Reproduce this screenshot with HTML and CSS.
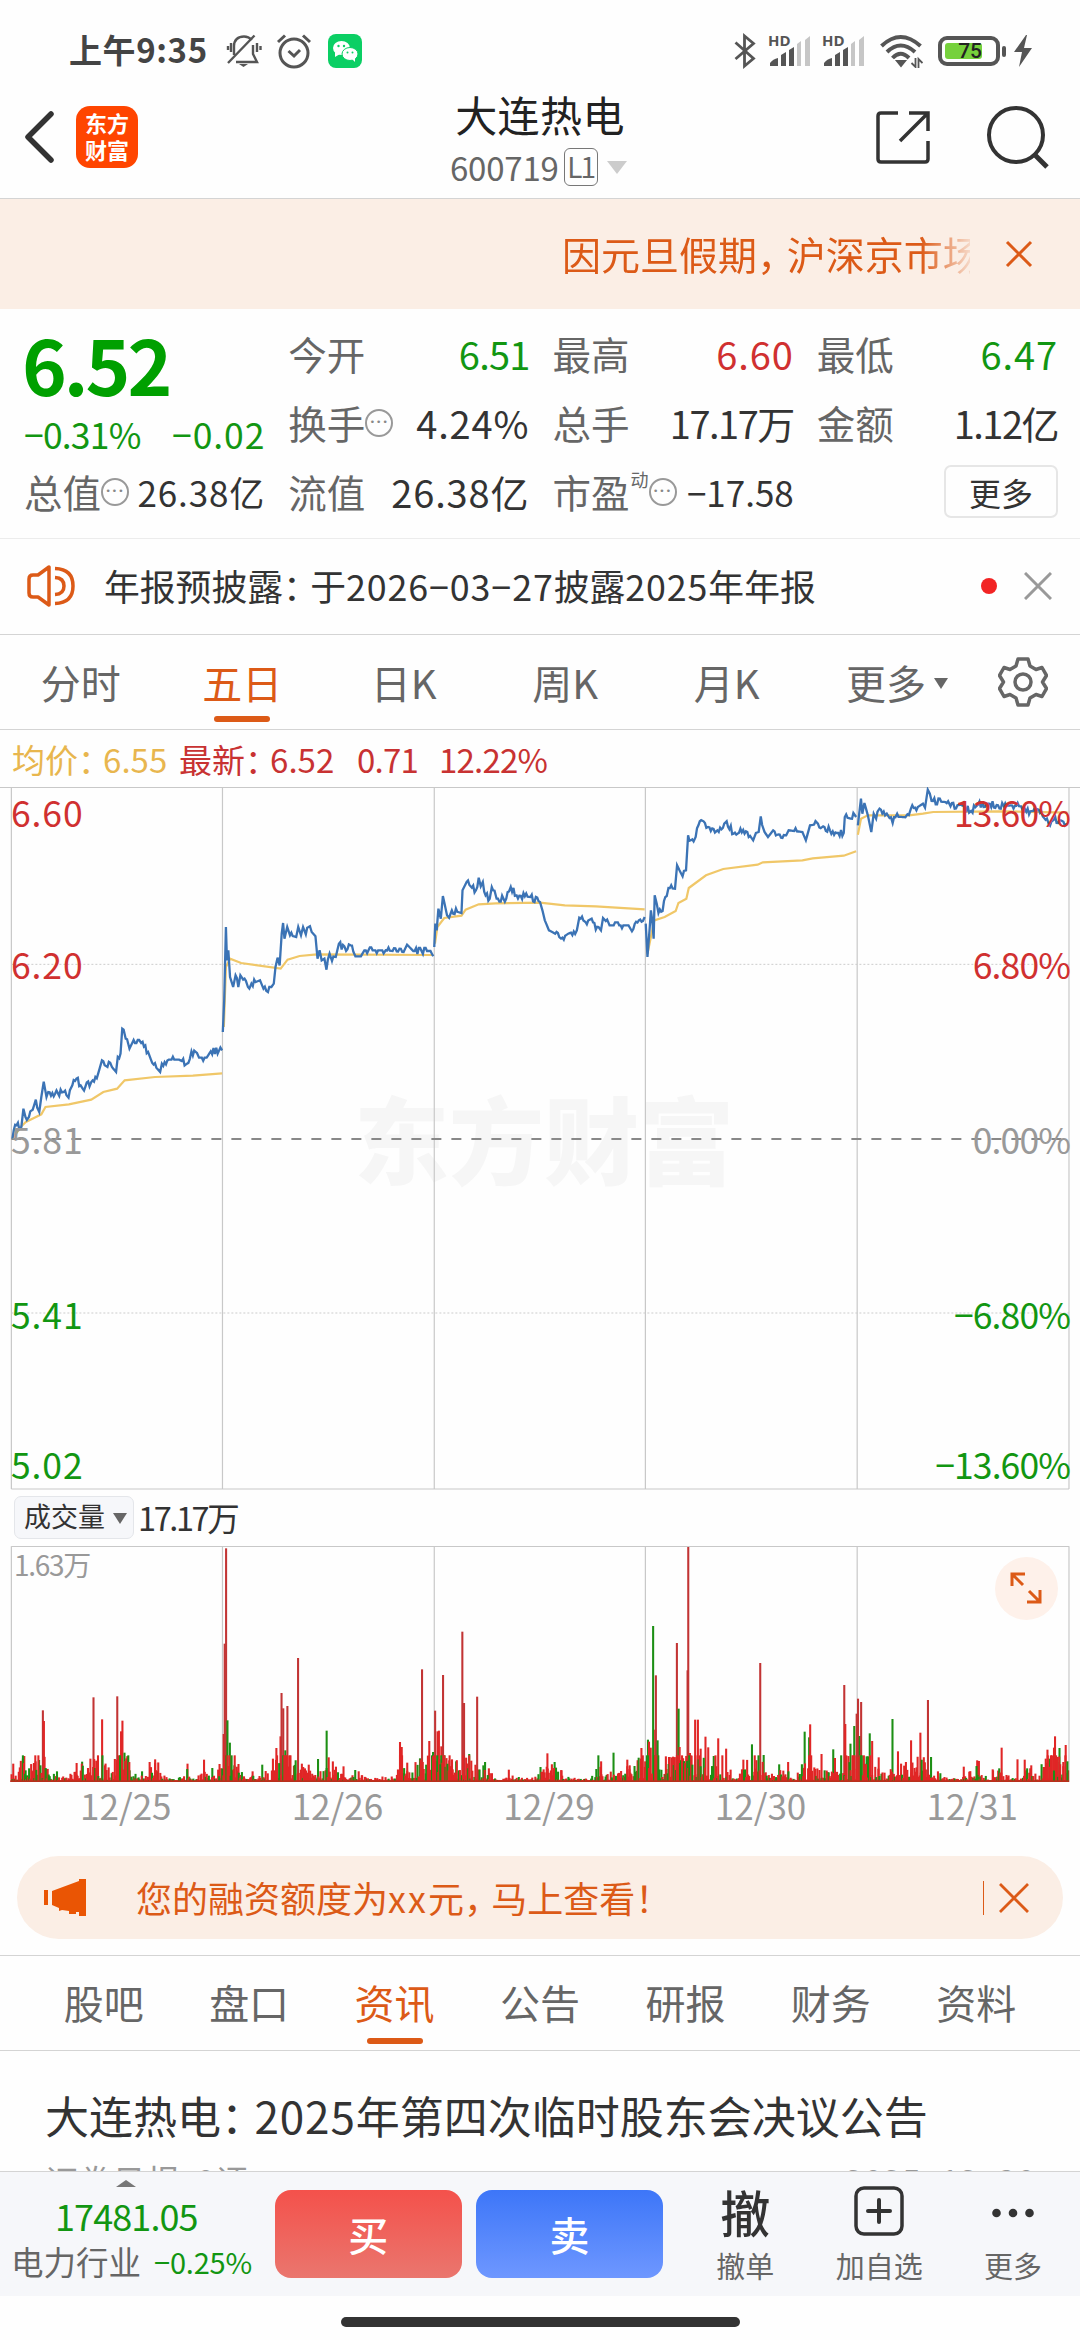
FILE: index.html
```html
<!DOCTYPE html>
<html lang="zh-CN">
<head>
    <meta charset="UTF-8">
    <meta name="viewport" content="width=device-width, initial-scale=1.0">
    <title>大连热电 600719</title>
    <link rel="stylesheet" href="styles.css">
</head>
<body>
    <div class="status">
        <span class="clock">上午9:35</span>
        <svg class="bell" width="36" height="34" viewBox="0 0 36 34" fill="none" stroke="#555" stroke-width="2.4">
            <path d="M8 21V12C8 6 12 2.500 18 2.500C21 2.500 24 4 26 6M27 11V20L31 28H10M5 9V18M2 12V16M31 9V18M34.500 12V16M28.500 1.500L2 29"/>
            <path d="M13 30h9l-4.500 3z" fill="#555" stroke="none"/>
        </svg>
        <svg class="alarm" width="36" height="36" viewBox="0 0 36 36" fill="none" stroke="#555" stroke-width="3">
            <circle cx="18" cy="20" r="14"/>
            <path d="M12.500 18L18 23L24 17M2 9L9 2.500M27 2.500L34 9"/>
        </svg>
        <svg class="wechat" width="34" height="34" viewBox="0 0 34 34">
            <rect width="34" height="34" rx="8" fill="#0bcf64"/>
            <ellipse cx="13.500" cy="14" rx="8.500" ry="7" fill="#fff"/>
            <path d="M7 18l0 5l5-3z" fill="#fff"/>
            <ellipse cx="22" cy="20" rx="8" ry="6.500" fill="#fff" stroke="#0bcf64" stroke-width="1"/>
            <path d="M24 25l3 3v-5z" fill="#fff"/>
            <g fill="#0bcf64"><circle cx="10.500" cy="12" r="1.200"/><circle cx="16" cy="12" r="1.200"/><circle cx="19.500" cy="18.500" r="1"/><circle cx="24.500" cy="18.500" r="1"/></g>
        </svg>
        <span class="spacer"></span>
        <svg class="bt" width="22" height="36" viewBox="0 0 22 36" fill="none" stroke="#555" stroke-width="2.800">
            <path d="M1.500 9.500L19.500 25.500L10.500 33V3L19.500 10.500L1.500 26"/>
        </svg>
        <div class="signal"><b>HD</b>
            <svg width="41" height="30" viewBox="0 0 41 30"><path d="M1 30v-3q3-4 8-5v8zM12 30V19l5-3v14zM20 30V14l5-3v19z" fill="#555"/><path d="M28 30V8l4-3v25zM36 30V4l5-4v30z" fill="#c6c6c6"/></svg>
        </div>
        <div class="signal second"><b>HD</b>
            <svg width="41" height="30" viewBox="0 0 41 30"><path d="M1 30v-3q3-4 8-5v8zM12 30V19l5-3v14zM20 30V14l5-3v19z" fill="#555"/><path d="M28 30V8l4-3v25zM36 30V4l5-4v30z" fill="#c6c6c6"/></svg>
        </div>
        <svg class="wifi" width="43" height="34" viewBox="0 0 43 34" fill="none" stroke="#555" stroke-width="4">
            <path d="M1.500 12Q20.500-6 40.500 12M7 18Q20.500 5 35 18M12.500 24Q20.500 15.500 29 24"/>
            <path d="M17 27h8l-4 5z" fill="#555" stroke-width="2"/>
            <path d="M35.500 24V33l-4-4M38.500 34V25l4 4" stroke-width="1.800"/>
        </svg>
        <div class="battery"><span>75</span></div>
        <i class="battery-cap"></i>
        <svg class="bolt" width="18" height="32" viewBox="0 0 18 32"><path d="M12 0L0 17H8L5 32L18 13H10L13 0z" fill="#555"/></svg>
    </div>

    <div class="nav">
        <svg class="back" width="32" height="54" viewBox="0 0 32 54" fill="none" stroke="#333" stroke-width="5.500" stroke-linecap="round" stroke-linejoin="round"><path d="M27 4L4 27L27 50"/></svg>
        <div class="logo">东方<br>财富</div>
        <div class="stock">
            <h1>大连热电</h1>
            <div class="code">600719<span class="level">L1</span><i class="tri"></i></div>
        </div>
        <svg class="share" width="54" height="54" viewBox="0 0 54 54" fill="none" stroke="#333" stroke-width="3.500">
            <path d="M22 3H5Q2 3 2 6V49Q2 52 5 52H49Q52 52 52 49V31M33 3H52V21M52 3L24 31"/>
        </svg>
        <svg class="search" width="64" height="66" viewBox="0 0 64 66" fill="none" stroke="#333" stroke-width="4">
            <circle cx="30" cy="30" r="27"/><path d="M48 49L61 62" stroke-width="5"/>
        </svg>
    </div>

    <div class="banner">
        <span class="banner-text">因元旦假期<s>，</s>沪深京市场</span>
        <svg width="28" height="28" viewBox="0 0 28 28" stroke="#dc5a17" stroke-width="3"><path d="M2 2L26 26M26 2L2 26"/></svg>
    </div>

    <div class="quote">
        <div class="price">
            <strong>6.52</strong>
            <div class="change"><span>−0.31%</span><span class="wide">−0.02</span></div>
        </div>
        <div class="cell"><label>今开</label><b class="green">6.51</b></div>
        <div class="cell"><label>最高</label><b class="red wide">6.60</b></div>
        <div class="cell"><label>最低</label><b class="green wide">6.47</b></div>
        <div class="cell"><label>换手</label><i class="info">•••</i><b class="wide">4.24%</b></div>
        <div class="cell"><label>总手</label><b class="tight">17.17万</b></div>
        <div class="cell"><label>金额</label><b class="tight">1.12亿</b></div>
        <div class="cell small"><label>总值</label><i class="info">•••</i><b class="wide">26.38亿</b></div>
        <div class="cell"><label>流值</label><b class="wide">26.38亿</b></div>
        <div class="cell small"><label>市盈</label><sup>动</sup><i class="info">•••</i><b>−17.58</b></div>
        <div class="cell"><button class="more">更多</button></div>
    </div>

    <div class="notice">
        <svg width="48" height="42" viewBox="0 0 48 42" fill="none" stroke="#dc5a17" stroke-width="3.500" stroke-linejoin="round">
            <path d="M11 10L22 2V40L11 32H6Q2 32 2 28V14Q2 10 6 10z"/>
            <path d="M28 12.500Q37 13 37 21Q37 29 28 29.500M28 3.500Q46 4 46 21Q46 38 28 38.500"/>
        </svg>
        <p>年报预披露<s>：</s>于<span class="wide">2026−03−27</span>披露<span class="wide">2025</span>年年报</p>
        <i class="dot"></i>
        <svg width="28" height="28" viewBox="0 0 28 28" stroke="#999" stroke-width="3"><path d="M1 1L27 27M27 1L1 27"/></svg>
    </div>

    <div class="periods">
        <a>分时</a>
        <a class="active">五日</a>
        <a>日K</a>
        <a>周K</a>
        <a>月K</a>
        <a>更多<i class="tri"></i></a>
        <svg width="50" height="50" viewBox="0 0 50 50" fill="none" stroke="#666" stroke-width="3.500" stroke-linejoin="round">
            <path d="M20 2H30L32 9L38 12.500L44 10.500L48.500 18.500L44.500 25L48.500 31.500L44 39.500L38 37.500L32 41L30 48H20L18 41L12 37.500L6 39.500L1.500 31.500L5.500 25L1.500 18.500L6 10.500L12 12.500L18 9z"/>
            <circle cx="25" cy="25" r="8"/>
        </svg>
    </div>

    <div class="legend">
        <span class="avg">均价<s>：</s>6.55</span>
        <span class="last">最新<s>：</s>6.52</span>
        <span class="diff">0.71</span>
        <span class="pct">12.22%</span>
    </div>

    <div class="chart">
        <div class="watermark">东方财富</div>
        <svg id="priceChart" width="1080" height="703" viewBox="0 0 3136 2109" preserveAspectRatio="none"></svg>
        <div class="axis left">
            <span class="red">6.60</span>
            <span class="red">6.20</span>
            <span class="gray">5.81</span>
            <span class="green">5.41</span>
            <span class="green">5.02</span>
        </div>
        <div class="axis right">
            <span class="red">13.60%</span>
            <span class="red">6.80%</span>
            <span class="gray">0.00%</span>
            <span class="green">−6.80%</span>
            <span class="green">−13.60%</span>
        </div>
    </div>

    <div class="volume-head">
        <span class="picker">成交量<i class="tri"></i></span>
        <span class="volume-now">17.17万</span>
    </div>

    <div class="volume">
        <svg id="volumeChart" width="1080" height="237" viewBox="0 0 3136 711" preserveAspectRatio="none"></svg>
        <span class="volume-max">1.63万</span>
        <div class="expand">
            <svg width="32" height="32" viewBox="0 0 32 32" fill="none" stroke="#dc5a17" stroke-width="3"><path d="M2 14V2H15M2 2L13 13M30 18V30H17M30 30L19 19"/></svg>
        </div>
    </div>
    <div class="dates"><span>12/25</span><span>12/26</span><span>12/29</span><span>12/30</span><span>12/31</span></div>

    <div class="promo">
        <svg width="42" height="38" viewBox="0 0 42 38" fill="#ea5504"><path d="M0 11h4v15H0zM8 12L35 2V0h7v37h-7v-4H32V35H25V32L18 31L15 32V29L8 26z"/></svg>
        <p>您的融资额度为<span class="wide">xx</span>元<s>，</s>马上查看！</p>
        <i class="sep"></i>
        <svg width="30" height="30" viewBox="0 0 30 30" stroke="#dc5a17" stroke-width="2.800"><path d="M1 1L29 29M29 1L1 29"/></svg>
    </div>

    <div class="sections">
        <a>股吧</a>
        <a>盘口</a>
        <a class="active">资讯</a>
        <a>公告</a>
        <a>研报</a>
        <a>财务</a>
        <a>资料</a>
    </div>

    <div class="news">
        <h2>大连热电<s>：</s><span class="wide">2025</span>年第四次临时股东会决议公告</h2>
        <div class="meta"><span>证券日报&nbsp; 0评</span><span>2025−12−30</span></div>
    </div>

    <div class="trade">
        <div class="sector">
            <i class="up"></i>
            <strong>17481.05</strong>
            <div><label>电力行业</label><b>−0.25%</b></div>
        </div>
        <button class="buy">买</button>
        <button class="sell">卖</button>
        <div class="tool revoke"><em>撤</em><span>撤单</span></div>
        <div class="tool add">
            <svg width="50" height="50" viewBox="0 0 50 50" fill="none" stroke="#333" stroke-width="3.500"><rect x="2" y="2" width="46" height="46" rx="8"/><path d="M25 14V36M14 25H36" stroke-width="4" stroke-linecap="round"/></svg>
            <span>加自选</span>
        </div>
        <div class="tool other">
            <svg width="50" height="50" viewBox="0 0 50 50" fill="#333"><circle cx="8.500" cy="27" r="4.300"/><circle cx="25" cy="27" r="4.300"/><circle cx="41.500" cy="27" r="4.300"/></svg>
            <span>更多</span>
        </div>
    </div>
    <div class="home"><i></i></div>

    <script src="script.js"></script>
</body>
</html>
```

FILE: styles.css
```css
* {
    box-sizing: border-box;
}

body {
    margin: 0;
    width: 1080px;
    height: 2340px;
    overflow: hidden;
    display: flex;
    flex-direction: column;
    background: #fefefe;
    color: #333;
    font-family: "Noto Sans CJK SC", sans-serif;
}

body > div {
    flex: none;
}

svg {
    display: block;
    flex: none;
}

h1, h2, p {
    margin: 0;
    font-weight: 400;
}

i, em {
    font-style: normal;
}

/* punctuation set narrower than a full character */
s {
    text-decoration: none;
    letter-spacing: -0.24em;
}

button {
    border: 0;
    padding: 0;
    font-family: inherit;
}

.green { color: #129612; }
.red { color: #d03030; }
.gray { color: #999; }
.wide { letter-spacing: 0.9px; }

.tri {
    display: inline-block;
    border: 7px solid transparent;
    border-top: 11px solid #666;
    border-bottom: 0;
}

/* status bar */
.status {
    display: flex;
    align-items: center;
    height: 82px;
    padding: 20px 48px 0 69px;
}

.clock {
    width: 157px;
    font-size: 33px;
    font-weight: 700;
    line-height: 40px;
    letter-spacing: 0.6px;
    margin-top: -5px;
    color: #444;
    white-space: nowrap;
}

.alarm { margin-left: 14px; }
.wechat { margin-left: 16px; }
.spacer { flex: 1; }

.signal {
    position: relative;
    width: 41px;
    margin-left: 13px;
}

.signal b {
    position: absolute;
    top: -3px;
    left: -1px;
    font: 700 15px/15px "Open Sans", sans-serif;
    color: #555;
    background: #fefefe;
}

.wifi { margin-left: 16px; }

.battery {
    width: 62px;
    height: 30px;
    margin-left: 15px;
    border: 4px solid #555;
    border-radius: 9px;
    padding: 3px;
}

.battery span {
    display: block;
    width: 37px;
    height: 16px;
    background: #76d13c;
    border-radius: 3px;
    font: 500 21px/17px Roboto, sans-serif;
    text-align: right;
    color: #222;
}

.battery-cap {
    width: 4px;
    height: 11px;
    margin: 0 8px 0 2px;
    border-radius: 2px;
    background: #555;
}

/* title bar */
.nav {
    display: flex;
    align-items: flex-start;
    height: 117px;
    padding-left: 24px;
    border-bottom: 1px solid #d4d4d4;
}

.back { margin-top: 28px; }

.logo {
    width: 62px;
    height: 62px;
    margin: 24px 0 0 20px;
    padding-top: 3px;
    border-radius: 14px;
    background: #ff4500;
    color: #fff;
    font-size: 22px;
    font-weight: 700;
    line-height: 27px;
    text-align: center;
}

.stock {
    width: 400px;
    margin: 9px 0 0 202px;
    text-align: center;
}

.stock h1 {
    font-size: 42px;
    line-height: 46px;
    letter-spacing: 0.4px;
    color: #222;
}

.code {
    display: flex;
    align-items: center;
    height: 40px;
    margin: 10px 0 0 110px;
    font-size: 33px;
    letter-spacing: -0.2px;
    color: #666;
}

.level {
    width: 34px;
    height: 38px;
    margin-left: 5px;
    border: 1.500px solid #777;
    border-radius: 6px;
    font-size: 28px;
    line-height: 34px;
    letter-spacing: -2px;
}

.code .tri {
    margin-left: 9px;
    border-width: 13px 10px 0;
    border-top-color: #ccc;
}

.share { margin: 28px 0 0 136px; }
.search { margin: 23px 0 0 56px; }

/* scrolling banner */
.banner {
    display: flex;
    align-items: center;
    justify-content: flex-end;
    height: 110px;
    padding-right: 47px;
    background: #fbeee5;
}

.banner-text {
    width: 408px;
    height: 60px;
    margin-right: 35px;
    overflow: hidden;
    white-space: nowrap;
    font-size: 39px;
    line-height: 58px;
    color: #dc5a17;
    -webkit-mask-image: linear-gradient(90deg, #000 88%, transparent 102%);
    mask-image: linear-gradient(90deg, #000 88%, transparent 102%);
}

/* quote figures */
.quote {
    display: grid;
    grid-template-columns: repeat(4, 1fr);
    grid-template-rows: repeat(3, 69px);
    column-gap: 23px;
    height: 230px;
    padding: 10px 22px 0 24px;
    border-bottom: 1px solid #ececec;
}

.price {
    grid-row: span 2;
    color: #00a000;
}

.price strong {
    display: block;
    height: 92px;
    margin-left: -2px;
    font-size: 76px;
    line-height: 88px;
    letter-spacing: -3px;
}

.change {
    display: flex;
    justify-content: space-between;
    font-size: 35.500px;
    line-height: 46px;
    color: #129612;
}

.change span:first-child { letter-spacing: -0.8px; }

.cell {
    display: flex;
    align-items: center;
    white-space: nowrap;
}

.cell label {
    font-size: 38.500px;
    line-height: 69px;
    color: #666;
}

.cell b {
    flex: 1;
    font-size: 38px;
    font-weight: 400;
    text-align: right;
}

.cell b.tight { letter-spacing: -1.500px; }
.cell b.green:not(.wide) { letter-spacing: -0.8px; }
.cell.small b { font-size: 35px; }

.cell sup {
    align-self: flex-start;
    margin: 9px 0 0 1px;
    font-size: 18px;
    line-height: 26px;
    color: #666;
}

.info {
    width: 28px;
    height: 28px;
    border: 2px solid #999;
    border-radius: 50%;
    font: 9px/23px "DejaVu Sans", sans-serif;
    letter-spacing: 1px;
    text-align: center;
    color: #888;
}

.more {
    width: 114px;
    height: 53px;
    margin-left: auto;
    border: 2px solid #e6e6e6;
    border-radius: 7px;
    background: #fefefe;
    font-size: 32px;
    line-height: 46px;
    color: #333;
}

/* disclosure notice */
.notice {
    display: flex;
    align-items: center;
    height: 96px;
    padding: 0 28px 2px 27px;
    border-bottom: 1px solid #d4d4d4;
}

.notice p {
    flex: 1;
    margin: -1px 0 0 29px;
    font-size: 35.800px;
    line-height: 50px;
}

.dot {
    width: 16px;
    height: 16px;
    margin-right: 27px;
    border-radius: 50%;
    background: #f22424;
}

/* chart period tabs */
.periods {
    display: flex;
    align-items: center;
    height: 95px;
    padding-right: 32px;
    border-bottom: 1px solid #d4d4d4;
    font-size: 40px;
    line-height: 91px;
    color: #666;
}

.periods a {
    position: relative;
    width: 161.500px;
    text-align: center;
    white-space: nowrap;
}

.periods a:nth-of-type(6) { width: 175px; margin-left: 2px; }
.periods .tri { margin: 0 0 10px 8px; }
.periods svg { margin-left: auto; }

.periods .active,
.sections .active {
    color: #dc5a17;
}

.active::after {
    content: "";
    position: absolute;
    left: 50%;
    bottom: 6px;
    width: 56px;
    height: 6px;
    margin-left: -28px;
    border-radius: 3px;
    background: #dc5a17;
}

.legend {
    display: flex;
    align-items: center;
    height: 57px;
    padding: 0 0 0 12px;
    font-size: 33px;
    line-height: 50px;
    white-space: nowrap;
    color: #c83232;
}

.legend .avg { width: 167px; color: #e8b64e; }
.legend .last { width: 178px; }
.legend .diff { width: 82px; letter-spacing: -0.8px; }
.legend .pct { letter-spacing: -0.8px; }

/* price chart */
.chart {
    position: relative;
    height: 703px;
}

.chart svg {
    position: relative;
}

.watermark {
    position: absolute;
    top: 288px;
    left: 354px;
    font-size: 95px;
    font-weight: 900;
    line-height: 124px;
    color: #f6f6f6;
}

.axis {
    position: absolute;
    top: 0;
    bottom: 0;
    display: grid;
    grid-template-rows: 51px 152px 175px 175px 150px;
    align-items: end;
    font-size: 35.500px;
    line-height: 52px;
}

.axis.left { left: 11px; letter-spacing: 0.9px; }
.axis.right { right: 10px; letter-spacing: -0.9px; text-align: right; }

.grid { fill: none; stroke: #c8c8c8; stroke-width: 1.200; vector-effect: non-scaling-stroke; }
.dots { fill: none; stroke: #ccc; stroke-width: 1; stroke-dasharray: 2 2; vector-effect: non-scaling-stroke; }
.base { fill: none; stroke: #888; stroke-width: 2; stroke-dasharray: 10 10; vector-effect: non-scaling-stroke; }
.line { fill: none; stroke: #3b73b5; stroke-width: 2.300; vector-effect: non-scaling-stroke; }
.mean { fill: none; stroke: #f0c768; stroke-width: 2.200; vector-effect: non-scaling-stroke; }

/* volume */
.volume-head {
    display: flex;
    align-items: center;
    height: 56px;
    padding: 0 0 2px 14px;
}

.picker {
    width: 120px;
    height: 43px;
    padding-left: 9px;
    border: 1px solid #e4e6ea;
    border-radius: 7px;
    background: #f6f7fa;
    font-size: 27px;
    line-height: 38px;
    white-space: nowrap;
}

.picker .tri { margin: 0 0 3px 8px; }

.volume-now {
    margin-left: 4px;
    font-size: 32.500px;
    line-height: 40px;
    letter-spacing: -2.400px;
}

.volume {
    position: relative;
    height: 237px;
}

.volume-max {
    position: absolute;
    top: 0;
    left: 14px;
    font-size: 28px;
    line-height: 36px;
    letter-spacing: -1.300px;
    color: #999;
}

.expand {
    position: absolute;
    top: 11px;
    right: 22px;
    width: 63px;
    height: 63px;
    padding: 15px;
    border-radius: 50%;
    background: #fef1ea;
}

.dates {
    display: flex;
    height: 73px;
    padding: 0 11px;
    font-size: 35px;
    line-height: 43px;
    text-align: center;
    color: #999;
}

.dates span { flex: 1; padding-left: 18px; }

/* promo pill */
.promo {
    display: flex;
    align-items: center;
    height: 83px;
    margin: 0 17px 16px;
    padding: 0 34px 0 27px;
    border-radius: 42px;
    background: #fbeee5;
    color: #dc5a17;
}

.promo p {
    flex: 1;
    margin: -1px 0 0 50px;
    font-size: 36px;
    line-height: 50px;
}

.promo .wide { letter-spacing: 2px; }

.sep {
    width: 1px;
    height: 34px;
    margin-right: 15px;
    background: #dc5a17;
}

/* content tabs */
.sections {
    display: flex;
    height: 96px;
    padding: 0 31px;
    border: solid #d4d4d4;
    border-width: 1px 0;
    font-size: 40px;
    line-height: 92px;
    text-align: center;
    color: #666;
}

.sections a {
    position: relative;
    flex: 1;
}

.news {
    height: 120px;
    padding: 30px 44px 0 45px;
    overflow: hidden;
}

.news h2 {
    font-size: 44px;
    line-height: 68px;
    white-space: nowrap;
}

.meta {
    display: flex;
    justify-content: space-between;
    margin-top: 8px;
    font-size: 33px;
    line-height: 46px;
    letter-spacing: 0.8px;
    color: #999;
}

/* bottom trading bar */
.trade {
    display: flex;
    height: 125px;
    border-top: 1px solid #d4d4d4;
    background: #f6f7fa;
}

.sector {
    width: 275px;
    padding: 8px 0 0 11px;
    white-space: nowrap;
}

.sector .up {
    display: block;
    width: 0;
    margin-left: 105px;
    border: 10px solid transparent;
    border-top: 0;
    border-bottom: 7px solid #777;
}

.sector strong {
    display: block;
    margin: 5px 0 0 44px;
    font-size: 36px;
    font-weight: 400;
    line-height: 46px;
    letter-spacing: -0.900px;
    color: #129612;
}

.sector div {
    display: flex;
    align-items: center;
    line-height: 46px;
}

.sector label { width: 143px; font-size: 32.500px; color: #666; }
.sector b { font-size: 29px; font-weight: 400; letter-spacing: -0.2px; color: #129612; }

.buy, .sell {
    width: 187px;
    height: 88px;
    margin: 18px 14px 0 0;
    border-radius: 16px;
    background: linear-gradient(#f4514b, #ea766e);
    font-size: 40px;
    font-weight: 500;
    line-height: 84px;
    color: #fff;
}

.sell {
    width: 188px;
    margin-right: 15px;
    background: linear-gradient(#3d76f8, #6e97ff);
}

.tool {
    display: flex;
    flex-direction: column;
    align-items: center;
    width: 134px;
    padding-top: 14px;
    font-size: 29px;
    line-height: 44px;
    color: #666;
}

.tool em {
    font-size: 50px;
    font-weight: 500;
    line-height: 50px;
    color: #333;
}

.tool span { margin-top: 7px; }

.home {
    display: flex;
    justify-content: center;
    height: 44px;
    padding-top: 21px;
}

.home i {
    width: 399px;
    height: 10px;
    border-radius: 5px;
    background: #333;
}
```

FILE: script.js
```js
const priceChart = document.getElementById('priceChart');
const volumeChart = document.getElementById('volumeChart');

// day separators, shared by both charts
const days = [33, 646, 1261, 1874, 2489, 3104];

// one array of [x, y] per trading day
const prices = [
    [[36,1055],[40,1030],[48,1015],[62,1020],[68,965],[74,990],[84,990],[95,968],[104,938],[114,975],[120,930],[127,884],[135,930],[140,915],[160,920],[185,915],[199,932],[210,895],[222,875],[240,905],[265,885],[285,860],[296,820],[325,840],[337,855],[342,810],[350,800],[355,725],[365,755],[376,785],[384,768],[410,768],[430,795],[442,828],[465,855],[470,830],[490,818],[520,818],[543,830],[556,793],[578,812],[600,812],[612,793],[645,790]],
    [[647,735],[651,640],[656,420],[659,520],[663,490],[668,570],[677,600],[684,565],[692,600],[698,565],[720,600],[730,590],[755,580],[765,605],[778,615],[788,600],[795,590],[800,540],[806,512],[812,535],[818,440],[822,408],[826,455],[834,420],[842,445],[860,450],[866,420],[874,445],[880,420],[888,442],[896,420],[905,435],[916,448],[922,515],[928,490],[934,520],[942,515],[948,548],[957,500],[964,522],[975,510],[984,470],[1005,492],[1018,475],[1032,508],[1048,508],[1058,490],[1120,490],[1172,495],[1182,473],[1200,492],[1250,492],[1258,508]],
    [[1261,480],[1264,410],[1268,430],[1273,365],[1280,395],[1286,327],[1294,365],[1304,392],[1312,370],[1340,378],[1343,310],[1355,285],[1370,302],[1382,310],[1390,272],[1396,298],[1402,285],[1410,325],[1422,335],[1428,300],[1442,335],[1470,335],[1483,300],[1500,325],[1540,330],[1568,345],[1575,370],[1582,400],[1594,430],[1612,440],[1629,455],[1650,440],[1675,430],[1682,392],[1700,405],[1718,395],[1730,428],[1745,430],[1751,393],[1770,415],[1825,415],[1835,433],[1855,400],[1872,390]],
    [[1875,410],[1880,510],[1886,430],[1890,370],[1894,400],[1898,455],[1901,325],[1907,350],[1912,378],[1924,372],[1932,330],[1941,303],[1960,305],[1966,235],[1973,250],[1982,268],[1992,250],[1998,145],[2006,160],[2020,150],[2028,115],[2043,103],[2056,120],[2083,130],[2110,103],[2130,140],[2150,125],[2170,135],[2187,160],[2195,138],[2203,135],[2209,88],[2220,135],[2230,150],[2245,130],[2260,142],[2283,145],[2290,130],[2330,135],[2340,160],[2352,115],[2375,110],[2390,118],[2410,130],[2430,138],[2450,138],[2453,90],[2470,95],[2478,78],[2486,90]],
    [[2491,115],[2500,35],[2504,80],[2510,48],[2520,85],[2530,135],[2537,80],[2544,95],[2554,65],[2575,80],[2592,108],[2605,80],[2635,82],[2645,65],[2665,60],[2680,50],[2686,62],[2694,8],[2700,20],[2705,42],[2745,45],[2760,58],[2790,53],[2820,72],[2840,53],[2870,50],[2915,58],[2935,55],[2965,58],[2972,75],[3000,72],[3020,78],[3045,110],[3060,98],[3080,100],[3098,110]]
];

const means = [
    [[36,1055],[60,1020],[75,1005],[100,992],[120,982],[132,960],[200,952],[265,938],[300,915],[340,905],[362,880],[450,870],[560,866],[645,859]],
    [[650,720],[656,540],[668,515],[700,528],[815,545],[835,518],[870,507],[920,502],[1258,504]],
    [[1263,470],[1270,420],[1290,393],[1340,386],[1352,368],[1390,352],[1440,349],[1568,347],[1640,355],[1730,358],[1872,367]],
    [[1880,500],[1900,400],[1930,390],[1962,372],[1970,348],[1993,335],[2000,303],[2050,265],[2100,246],[2200,233],[2215,226],[2330,220],[2360,214],[2450,206],[2486,193]],
    [[2491,143],[2500,95],[2520,85],[2640,85],[2680,80],[2710,75],[2900,73],[3100,77]]
];

// main volume bars: [x, height, color], g = falling minute
const bars = [
    [38,55],[70,78],[66,70],[74,35,'g'],[98,57],[103,62],[113,66,'g'],[124,215],[127,183],[133,40,'g'],[165,32,'g'],[222,57],[238,61,'g'],[262,70],[271,254],[284,80],[296,188],[304,50],[340,257],[351,152],[355,184],[361,88,'g'],[376,35,'g'],[412,32,'g'],[434,60],[450,68],[458,32,'g'],[544,55],[592,67],[616,42,'g'],[637,54],
    [649,144],[652,415],[656,701],[660,185,'g'],[667,118,'g'],[680,50,'g'],[692,54],[733,32],[761,52,'g'],[792,70],[802,102],[814,137],[817,267],[822,221],[828,95,'g'],[834,228],[853,48],[865,372],[880,45],[896,52],[923,69,'g'],[948,154,'g'],[954,74],[975,46],[997,47],[1031,36,'g'],[1051,20],[1161,120],[1166,105],[1182,58],[1219,71,'g'],[1225,338],[1237,52,'g'],[1246,123],
    [1257,90,'g'],[1263,214],[1270,152],[1274,154],[1281,107],[1286,321],[1290,80,'g'],[1304,65],[1312,68],[1324,62,'g'],[1342,451],[1347,237],[1353,73],[1362,84,'g'],[1385,256],[1403,50,'g'],[1408,60,'g'],[1419,41],[1477,37],[1569,45,'g'],[1589,86],[1610,60,'g'],[1630,35],[1737,80,'g'],[1745,62],[1781,88,'g'],[1821,67],[1828,50],[1852,59],[1862,102],
    [1873,62],[1881,127,'g'],[1884,121],[1889,103],[1896,468,'g'],[1902,157],[1904,320],[1909,125,'g'],[1933,77],[1942,75],[1954,76],[1965,417],[1970,220,'g'],[1973,105],[1996,335],[1998,705],[2003,87],[2007,78],[2018,187],[2026,187],[2034,100],[2048,136],[2056,104],[2072,78,'g'],[2077,80],[2085,131],[2108,100],[2158,67],[2183,113,'g'],[2191,80],[2207,357],[2217,81,'g'],[2262,53,'g'],[2288,60],[2336,151,'g'],[2349,134,'g'],[2352,173],[2385,84],[2419,98,'g'],[2424,72],[2451,291],[2454,174],[2469,115,'g'],[2480,168,'g'],
    [2487,205],[2491,250],[2496,138,'g'],[2500,240],[2510,55,'g'],[2516,77,'g'],[2520,77,'g'],[2525,146,'g'],[2532,123],[2551,74],[2591,189,'g'],[2607,92],[2630,60],[2645,125],[2672,148],[2694,246],[2703,75,'g'],[2723,32],[2798,46],[2837,65],[2842,63],[2882,38],[2908,103],[2954,68],[2975,67],[2994,50],[3030,45],[3041,97],[3047,70,'g'],[3060,103],[3063,137],[3070,60,'g'],[3076,102,'g'],[3087,60],[3094,111],[3101,35]
];

// small fixed-seed generator, keeps minute noise stable between reloads
let seed = 17;
function rand() {
    seed = (seed * 16807) % 2147483647;
    return seed / 2147483647;
}

// fill in minute steps between the key prices
function minuteLine(points) {
    let d = 'M' + points[0];
    for (let i = 1; i < points.length; i++) {
        const [x0, y0] = points[i - 1];
        const [x1, y1] = points[i];
        for (let x = x0 + 4; x < x1 - 3; x += 4) {
            const y = y0 + (y1 - y0) * (x - x0) / (x1 - x0);
            d += 'L' + x + ',' + (y + [-9, 0, 0, 9][Math.floor(rand() * 4)]).toFixed(1);
        }
        d += 'L' + points[i];
    }
    return d;
}

function path(cls, d) {
    return `<path class="${cls}" d="${d}"/>`;
}

function drawPrices() {
    let out = path('grid', 'M0,1H3136M33,2106H3104' + days.map(x => `M${x},1V2106`).join(''));
    out += path('dots', 'M33,532H3104M33,1578H3104');
    out += path('base', 'M33,1056H3104');
    out += means.map(m => path('mean', 'M' + m.join('L'))).join('');
    out += prices.map(p => path('line', minuteLine(p))).join('');
    priceChart.innerHTML = out;
}

function drawVolume() {
    let out = path('grid', 'M33,1H3104' + days.map(x => `M${x},1V708`).join(''));
    let minutes = [];
    for (let x = 33; x < 3100; x += 3) {
        // volume gathers around the larger trades
        let near = 0;
        bars.forEach(b => {
            const gap = Math.abs(b[0] - x);
            if (gap < 30) near += Math.min(b[1], 130) * (1 - gap / 30);
        });
        const h = 5 + rand() * rand() * (12 + near * 0.5);
        minutes.push([x, Math.min(h, 80), rand() < 0.28 ? 'g' : '']);
    }
    bars.concat(minutes).forEach(([x, h, c]) => {
        out += `<rect x="${x - 2.5}" y="${(708 - h).toFixed(1)}" width="6" height="${h.toFixed(1)}" fill="${c === 'g' ? '#1c8f14' : h > 200 ? '#c23434' : '#e02626'}"/>`;
    });
    out += '<rect x="30" y="703" width="3074" height="5" fill="#b8301c"/>';
    volumeChart.innerHTML = out;
}

drawPrices();
drawVolume();
```
